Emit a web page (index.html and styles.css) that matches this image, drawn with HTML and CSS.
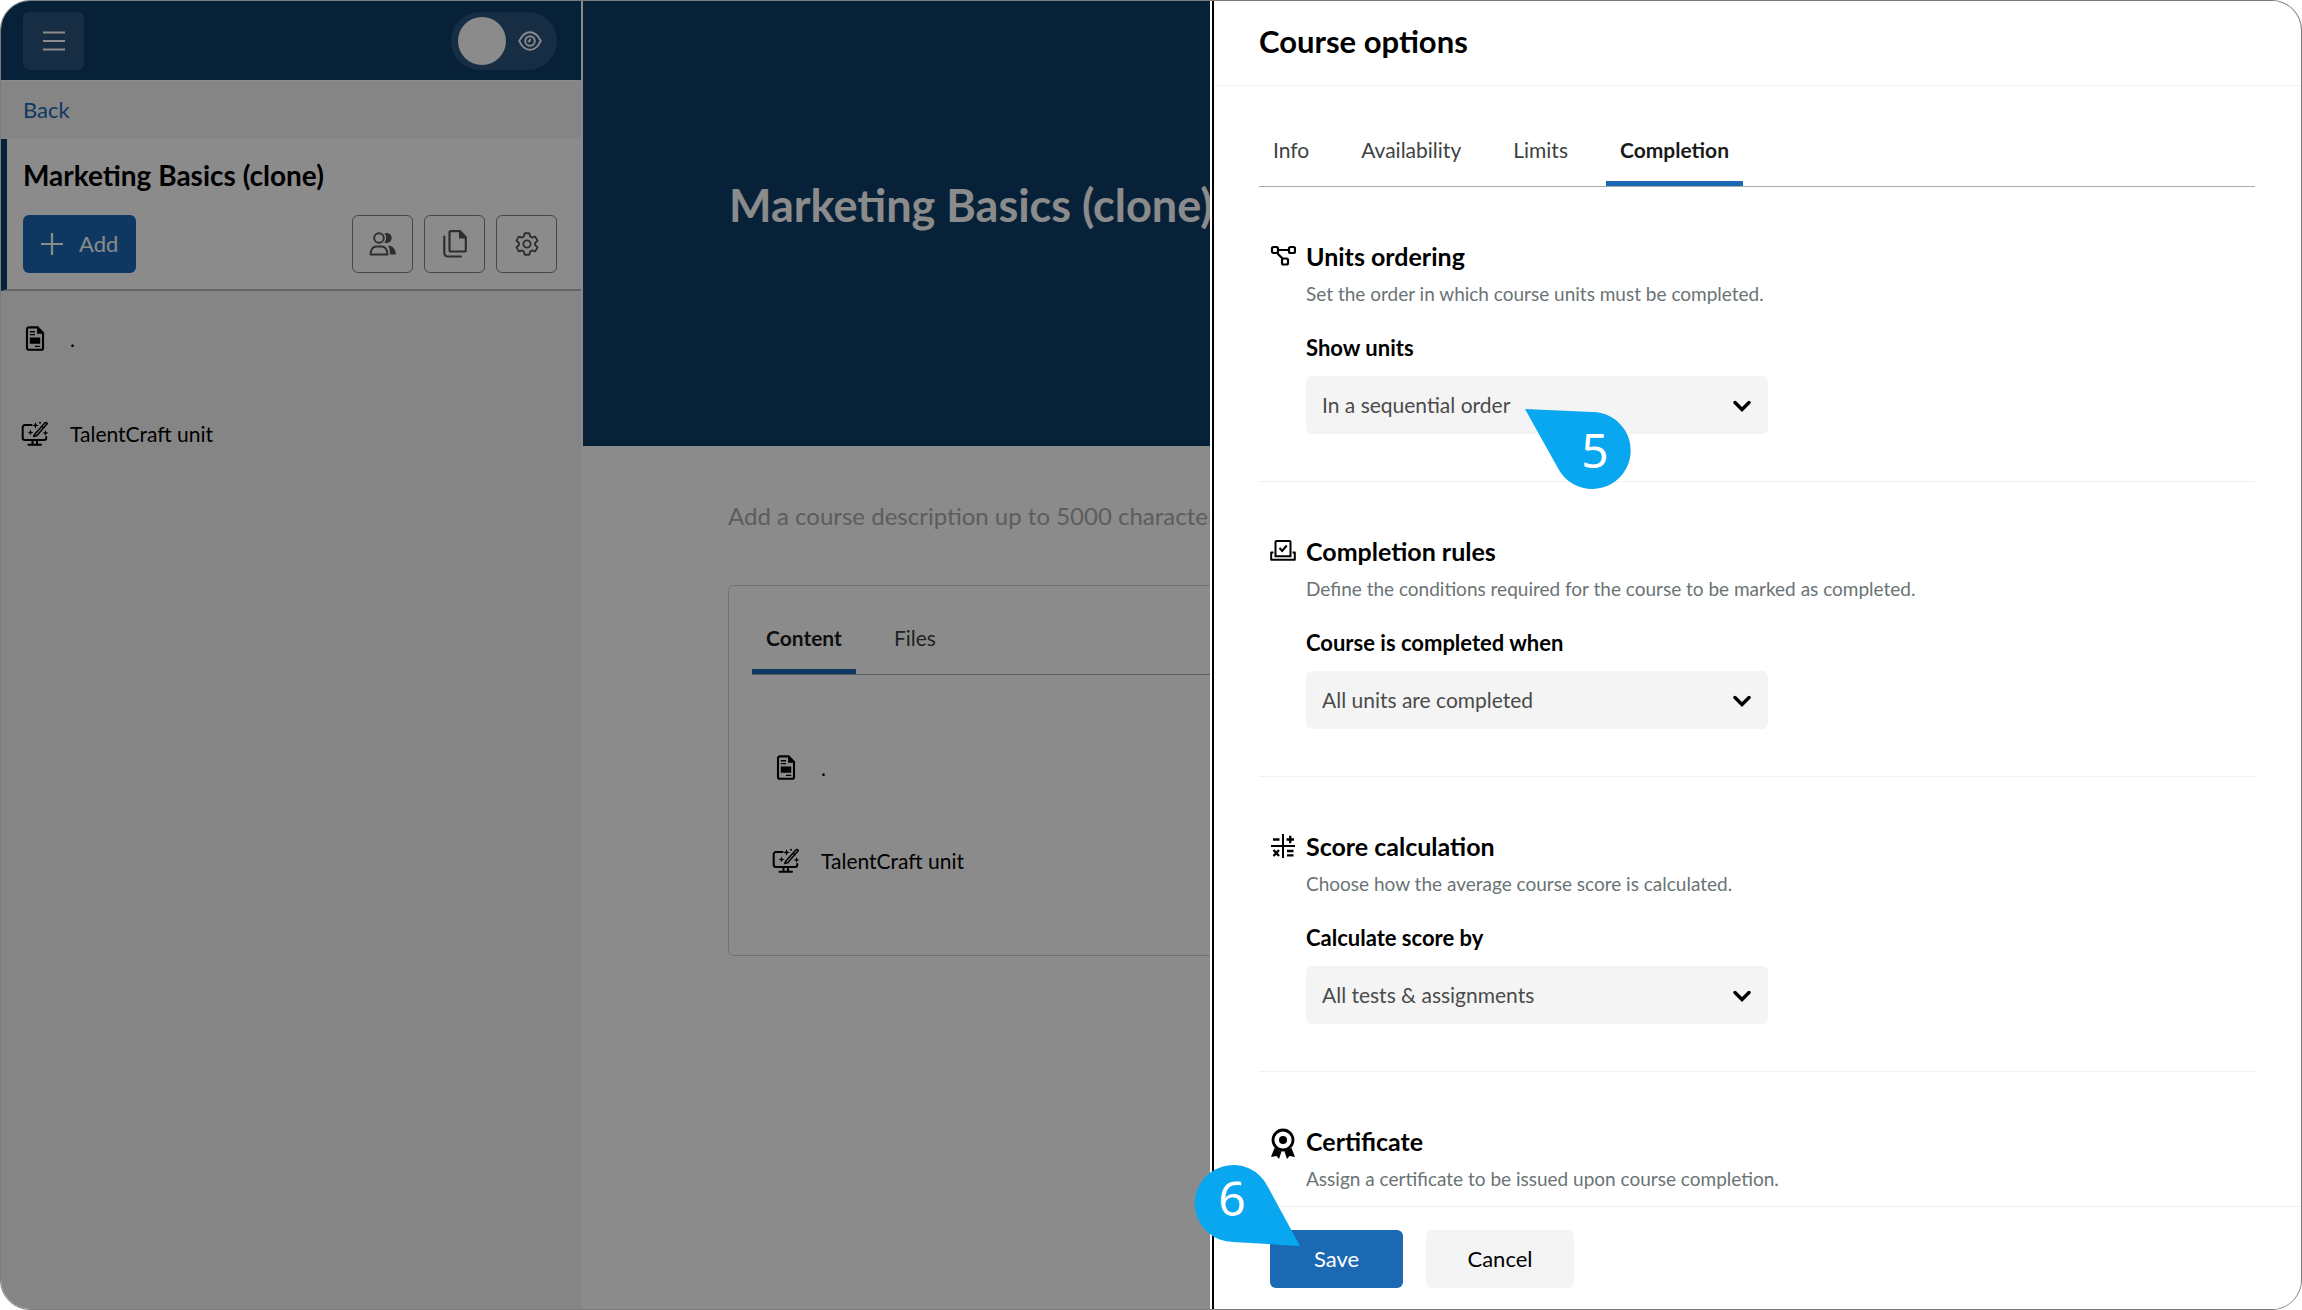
FILE: index.html
```html
<!DOCTYPE html>
<html lang="en">
<head>
    <meta charset="UTF-8">
    <meta name="viewport" content="width=device-width, initial-scale=1.0">
    <title>Course options</title>
    <link rel="stylesheet" href="styles.css">
</head>
<body>
    <!-- shared icons -->
    <svg class="sprite" aria-hidden="true">
        <symbol id="icon-file" viewBox="0 0 18 24">
            <path d="M3 1.3h8.5l5.2 5.4V21a1.8 1.8 0 0 1-1.8 1.8H3A1.8 1.8 0 0 1 1.3 21V3A1.8 1.8 0 0 1 3 1.3z" fill="none" stroke="currentColor" stroke-width="2"/>
            <path d="M11 1v6.5h6.5zM4 11h10v6H4z" fill="currentColor"/>
            <path d="M4 5.5h5M4 8.3h5M9 19.5h5" stroke="currentColor" stroke-width="1.3"/>
        </symbol>
        <symbol id="icon-craft" viewBox="0 0 27 25">
            <path d="M10 4H3.5A2.3 2.3 0 0 0 1.200 6.300v10.400A2.300 2.300 0 0 0 3.500 19h19a2.300 2.300 0 0 0 2.300-2.300V16M11 19v4M15.500 19v4M7 23.700h12.500" fill="none" stroke="currentColor" stroke-width="2" stroke-linecap="round"/>
            <path d="M13 13.500 23.500 1.800q1.400-.7 2.300.8L15.500 14.500l-3.200 1zM20.500 5l2.300 2.200" fill="none" stroke="currentColor" stroke-width="1.500" stroke-linejoin="round"/>
            <path d="m14 1 .9 2.500 2.500.9-2.500.9L14 7.800l-.9-2.500-2.500-.9 2.500-.9zM9 8.500l.8 2.200 2.200.8-2.200.8-.8 2.200-.8-2.200-2.200-.8 2.200-.8zM24 9l.8 2.200 2.200.8-2.200.8-.8 2.200-.8-2.200-2.200-.8 2.200-.8z" fill="currentColor"/>
            <circle cx="18.500" cy="1.700" r="1" fill="currentColor"/>
        </symbol>
        <symbol id="icon-chevron" viewBox="0 0 18 12">
            <path d="m2 2.500 7 7 7-7" fill="none" stroke="currentColor" stroke-width="3.400" stroke-linecap="round"/>
        </symbol>
    </svg>

    <div class="app">
        <aside class="sidebar">
            <div class="topbar">
                <button class="menu-btn" aria-label="Menu">
                    <svg width="24" height="22" viewBox="0 0 24 22"><path d="M1 2.500h22M1 11h22M1 19.500h22" stroke="#fff" stroke-width="2.200"/></svg>
                </button>
                <button class="view-toggle" aria-label="Preview">
                    <span class="knob"></span>
                    <svg width="24" height="20" viewBox="0 0 24 20" fill="none" stroke="#fff" stroke-width="1.900" stroke-linejoin="round"><path d="M1.200 10 4 5.500C6.500 2.500 9 1.200 12 1.200s5.500 1.300 8 4.300l2.800 4.500-2.800 4.500c-2.500 3-5 4.300-8 4.300s-5.500-1.300-8-4.300z"/><circle cx="12" cy="10" r="4.800"/><path d="M9.800 10.300c1.800.3 2.600-.7 2.200-2.500"/></svg>
                </button>
            </div>
            <nav class="back"><a href="#">Back</a></nav>
            <div class="course-head">
                <h2>Marketing Basics (clone)</h2>
                <div class="course-actions">
                    <button class="add-btn">
                        <svg width="22" height="22" viewBox="0 0 22 22"><path d="M11 0v22M0 11h22" stroke="#fff" stroke-width="2.200"/></svg>
                        Add
                    </button>
                    <div class="tool-btns">
                        <button class="tool-btn" aria-label="Users">
                            <svg width="28" height="24" viewBox="0 0 28 24"><path d="M15.500 1.500a5 5 0 1 1 0 9 7 7 0 0 0 0-9zM19 13.500c5 .5 7.500 3.500 8 9h-6c0-4-.5-6.500-2-9z" fill="currentColor"/><circle cx="10" cy="6" r="4.800" fill="none" stroke="currentColor" stroke-width="1.900"/><path d="M1.500 22.500c.3-5 2.500-8 6-8h5c3.500 0 5.700 3 6 8z" fill="none" stroke="currentColor" stroke-width="1.900" stroke-linejoin="round"/></svg>
                        </button>
                        <button class="tool-btn" aria-label="Files">
                            <svg width="24" height="28" viewBox="0 0 24 28"><path d="M8 1.200h9l5.800 6V20A1.500 1.500 0 0 1 21.300 21.500H8A1.500 1.500 0 0 1 6.500 20V2.700A1.500 1.500 0 0 1 8 1.200zM1.300 6.500V23a3.500 3.500 0 0 0 3.500 3.500H18" fill="none" stroke="currentColor" stroke-width="2.200" stroke-linecap="round"/><path d="M16 1v7.500h7z" fill="currentColor"/></svg>
                        </button>
                        <button class="tool-btn" aria-label="Settings">
                            <svg width="24" height="24" viewBox="0 0 24 24" fill="none" stroke="currentColor" stroke-width="1.900" stroke-linejoin="round"><path d="M9.700 1.300h4.600l.9 3.200 1.700 1 3.300-.9 2.300 4-2.400 2.400v2l2.400 2.400-2.300 4-3.300-.9-1.700 1-.9 3.200H9.700l-.9-3.200-1.700-1-3.300.9-2.300-4L3.900 13v-2L1.500 8.600l2.300-4 3.300.9 1.700-1z"/><circle cx="12" cy="12" r="3.600"/></svg>
                        </button>
                    </div>
                </div>
            </div>
            <ul class="units">
                <li><svg class="unit-icon"><use href="#icon-file"/></svg>.</li>
                <li><svg class="unit-icon"><use href="#icon-craft"/></svg>TalentCraft unit</li>
            </ul>
        </aside>

        <main class="course">
            <header class="hero"><h1>Marketing Basics (clone)</h1></header>
            <div class="course-body">
                <p class="description">Add a course description up to 5000 characters</p>
                <section class="card">
                    <div class="tabs">
                        <button class="tab active">Content</button>
                        <button class="tab">Files</button>
                    </div>
                    <ul class="units">
                        <li><svg class="unit-icon"><use href="#icon-file"/></svg>.</li>
                        <li><svg class="unit-icon"><use href="#icon-craft"/></svg>TalentCraft unit</li>
                    </ul>
                </section>
            </div>
        </main>

        <div class="backdrop"></div>

        <div class="drawer" role="dialog" aria-labelledby="drawerTitle">
            <header class="drawer-header"><h2 id="drawerTitle">Course options</h2></header>

            <div class="drawer-body">
                <div class="tabs">
                    <button class="tab">Info</button>
                    <button class="tab">Availability</button>
                    <button class="tab">Limits</button>
                    <button class="tab active">Completion</button>
                </div>

                <section class="option">
                    <svg class="option-icon" viewBox="0 0 26 26" fill="none" stroke="currentColor" stroke-width="2.200"><rect x="2" y="4" width="6" height="6" rx="1.500"/><rect x="19" y="4" width="6" height="6" rx="1.500"/><rect x="12" y="15.500" width="6" height="6" rx="1.500"/><path d="M8 7h11M7 10l6 6"/></svg>
                    <div class="option-text">
                        <h3>Units ordering</h3>
                        <p>Set the order in which course units must be completed.</p>
                        <label for="showUnits">Show units</label>
                        <div class="select">
                            <select id="showUnits"><option>In a sequential order</option><option>In any order</option></select>
                            <svg class="chevron"><use href="#icon-chevron"/></svg>
                            <div class="marker marker-select">
                                <svg width="110" height="84" viewBox="0 0 110 84"><path d="M2 2 69 5A38.500 38.500 0 1 1 36 63z" fill="#09a7ef"/></svg>
                                <span>5</span>
                            </div>
                        </div>
                    </div>
                </section>

                <section class="option">
                    <svg class="option-icon" viewBox="0 0 26 26" fill="none" stroke="currentColor" stroke-width="2"><path d="M5.500 18.500V4A1 1 0 0 1 6.500 3h13A1 1 0 0 1 20.500 4v14.500M4.500 18.300h17M3.500 14.500H1.200v7.300h23.600v-7.300h-2.300" stroke-linejoin="round"/><path d="m9.500 10 2.700 3 4.500-5.500"/></svg>
                    <div class="option-text">
                        <h3>Completion rules</h3>
                        <p>Define the conditions required for the course to be marked as completed.</p>
                        <label for="completedWhen">Course is completed when</label>
                        <div class="select">
                            <select id="completedWhen"><option>All units are completed</option></select>
                            <svg class="chevron"><use href="#icon-chevron"/></svg>
                        </div>
                    </div>
                </section>

                <section class="option">
                    <svg class="option-icon" viewBox="0 0 26 26" fill="none" stroke="currentColor" stroke-width="2"><path d="M13 1v24M1 13h24"/><path d="M3 6.500h6.500M16.500 6.500H24M20.200 2.800v7.400M3.500 17l5.500 6M9 17l-5.500 6M17 18h6.500M17 22.300h6.500" stroke-width="2.300"/></svg>
                    <div class="option-text">
                        <h3>Score calculation</h3>
                        <p>Choose how the average course score is calculated.</p>
                        <label for="scoreBy">Calculate score by</label>
                        <div class="select">
                            <select id="scoreBy"><option>All tests &amp; assignments</option></select>
                            <svg class="chevron"><use href="#icon-chevron"/></svg>
                        </div>
                    </div>
                </section>

                <section class="option">
                    <svg class="option-icon certificate" viewBox="0 0 26 32"><circle cx="13" cy="12" r="10" fill="none" stroke="currentColor" stroke-width="2.800"/><circle cx="13" cy="12" r="4" fill="currentColor"/><path d="m4.500 20 7 3.500L9 31l-2.500-3L1 29zM21.500 20l-7 3.500L17 31l2.500-3L25 29z" fill="currentColor"/></svg>
                    <div class="option-text">
                        <h3>Certificate</h3>
                        <p>Assign a certificate to be issued upon course completion.</p>
                    </div>
                </section>
            </div>

            <footer class="drawer-footer">
                <button class="save-btn">Save</button>
                <button class="cancel-btn">Cancel</button>
                <div class="marker marker-save">
                    <svg width="110" height="84" viewBox="0 0 110 84"><path d="M108 82 41 78A38.500 38.500 0 1 1 76 23z" fill="#09a7ef"/></svg>
                    <span>6</span>
                </div>
            </footer>
        </div>
    </div>
</body>
</html>
```
FILE: styles.css
```css
* {
    box-sizing: border-box;
}
body {
    margin: 0;
    background-color: #fff;
    color: #000;
    font-family: Lato, "Open Sans", sans-serif;
    font-size: 21px;
    line-height: 28px;
}
h1, h2, h3, p, ul {
    margin: 0;
    padding: 0;
}
ul {
    list-style: none;
}
button, select {
    font: inherit;
    color: inherit;
    border: none;
    background: none;
    padding: 0;
    cursor: pointer;
}
svg {
    display: block;
    flex-shrink: 0;
}
.sprite {
    position: absolute;
    width: 0;
    height: 0;
}
.app {
    position: relative;
    display: flex;
    height: 100vh;
    border: 1px solid #7b7b7b;
    border-radius: 30px;
    overflow: hidden;
}

/* sidebar */
.sidebar {
    width: 582px;
    flex-shrink: 0;
    background-color: #f4f4f4;
    border-right: 2px solid #fff;
}
.topbar {
    display: flex;
    justify-content: space-between;
    align-items: center;
    height: 80px;
    padding: 0 24px 0 22px;
    background-color: #0e3d6a;
    border-bottom: 1px solid #fff;
}
.menu-btn, .view-toggle {
    display: flex;
    align-items: center;
    height: 58px;
    background-color: rgba(255, 255, 255, 0.12);
}
.menu-btn {
    width: 61px;
    justify-content: center;
    border-radius: 6px;
}
.view-toggle {
    width: 106px;
    justify-content: space-between;
    padding: 0 15px 0 7px;
    border-radius: 29px;
}
.knob {
    width: 48px;
    height: 48px;
    border-radius: 50%;
    background-color: #fff;
}
.back {
    padding: 15px 22px;
    font-size: 22px;
}
.back a {
    color: #1b68b3;
    text-decoration: none;
}
.course-head {
    padding: 20px 24px 16px 16px;
    border-left: 6px solid #0e3d6a;
    border-bottom: 2px solid #b5bbbd;
    background-color: #fff;
}
.course-head h2 {
    font-size: 28px;
    line-height: 32px;
    margin-bottom: 24px;
}
.course-actions, .tool-btns {
    display: flex;
    justify-content: space-between;
}
.tool-btns {
    gap: 11px;
}
.add-btn {
    display: flex;
    align-items: center;
    gap: 16px;
    height: 58px;
    padding: 0 18px;
    border-radius: 6px;
    background-color: #1b68b3;
    color: #fff;
    font-size: 22px;
}
.tool-btn {
    display: flex;
    align-items: center;
    justify-content: center;
    width: 61px;
    height: 58px;
    border: 1px solid #7d8587;
    border-radius: 6px;
    color: #505759;
}
.units li {
    display: flex;
    align-items: center;
    gap: 21px;
    height: 95px;
}
.sidebar .units {
    padding-left: 20px;
}
.unit-icon {
    width: 28px;
    height: 25px;
}

/* course page */
.course {
    flex: 1;
    min-width: 0;
    background-color: #fff;
}
.hero {
    display: flex;
    align-items: center;
    height: 445px;
    padding: 0 146px 38px;
    background-color: #0e3d6a;
    color: #fff;
}
.hero h1 {
    font-size: 45px;
    line-height: 52px;
}
.course-body {
    padding: 54px 145px;
}
.description {
    margin-bottom: 53px;
    font-size: 24px;
    line-height: 32px;
    color: #a7abad;
}
.card {
    padding: 22px 23px 48px;
    border: 1px solid #cfd1d2;
    border-radius: 6px;
}
.card .units {
    padding: 46px 20px 0;
}
.card .units li {
    height: 93px;
}

/* tabs */
.tabs {
    display: flex;
    gap: 24px;
    border-bottom: 1px solid #a3abad;
}
.tab {
    height: 66px;
    padding: 0 14px 1px;
    border-bottom: 5px solid transparent;
    color: #3c4243;
}
.tab.active {
    border-bottom-color: #1b68b3;
    color: #1a1a1a;
    font-weight: 700;
}

.backdrop {
    position: absolute;
    inset: 0;
    background-color: rgba(0, 0, 0, 0.455);
}

/* drawer over the course page */
.drawer {
    position: absolute;
    top: 0;
    right: 0;
    bottom: 0;
    display: flex;
    flex-direction: column;
    width: calc(50% - 61px);
    border-left: 2px solid #000;
    box-shadow: -2px 0 0 #fff;
    background-color: #fff;
}
.drawer-header {
    padding: 21px 45px 25px;
    border-bottom: 1px solid #f1f1f1;
}
.drawer-header h2 {
    font-size: 31px;
    line-height: 38px;
}
.drawer-body {
    flex: 1;
    min-height: 0;
    overflow: hidden;
    padding: 34px 46px 0 45px;
}
.option {
    display: flex;
    gap: 10px;
    padding: 53px 0 47px 11px;
    border-bottom: 1px solid #f1f1f1;
}
.option-icon {
    width: 26px;
    height: 26px;
    margin-top: 3px;
}
.option-icon.certificate {
    height: 32px;
}
.option-text {
    flex: 1;
}
.option h3 {
    margin-bottom: 10px;
    font-size: 25px;
    line-height: 32px;
}
.option p {
    margin-bottom: 30px;
    font-size: 19px;
    line-height: 24px;
    color: #6a7375;
}
.option label {
    display: block;
    margin-bottom: 16px;
    font-size: 22px;
    line-height: 24px;
    font-weight: 700;
}
.select {
    position: relative;
    width: 462px;
    max-width: 100%;
}
.select select {
    display: block;
    width: 100%;
    height: 58px;
    padding: 0 16px;
    border-radius: 6px;
    background-color: #f4f4f4;
    color: #4b4b4b;
    appearance: none;
}
.chevron {
    position: absolute;
    top: 24px;
    right: 17px;
    width: 18px;
    height: 12px;
    pointer-events: none;
}
.drawer-footer {
    position: relative;
    display: flex;
    gap: 23px;
    padding: 23px 56px 21px;
    border-top: 1px solid #f1f1f1;
}
.save-btn, .cancel-btn {
    height: 58px;
    border-radius: 6px;
    font-size: 22px;
}
.save-btn {
    width: 133px;
    background-color: #1b68b3;
    color: #fff;
}
.cancel-btn {
    width: 148px;
    background-color: #f4f4f4;
}

/* numbered step markers */
.marker {
    position: absolute;
    width: 110px;
    height: 84px;
    color: #fff;
    font-family: "Noto Sans", sans-serif;
    font-size: 48px;
    line-height: 76px;
    text-align: center;
}
.marker span {
    position: absolute;
    width: 76px;
}
.marker-select {
    top: 31px;
    left: 217px;
}
.marker-select span {
    top: 5px;
    right: 0;
}
.marker-save {
    top: -43px;
    left: -22px;
}
.marker-save span {
    top: -4px;
    left: 2px;
}
```
